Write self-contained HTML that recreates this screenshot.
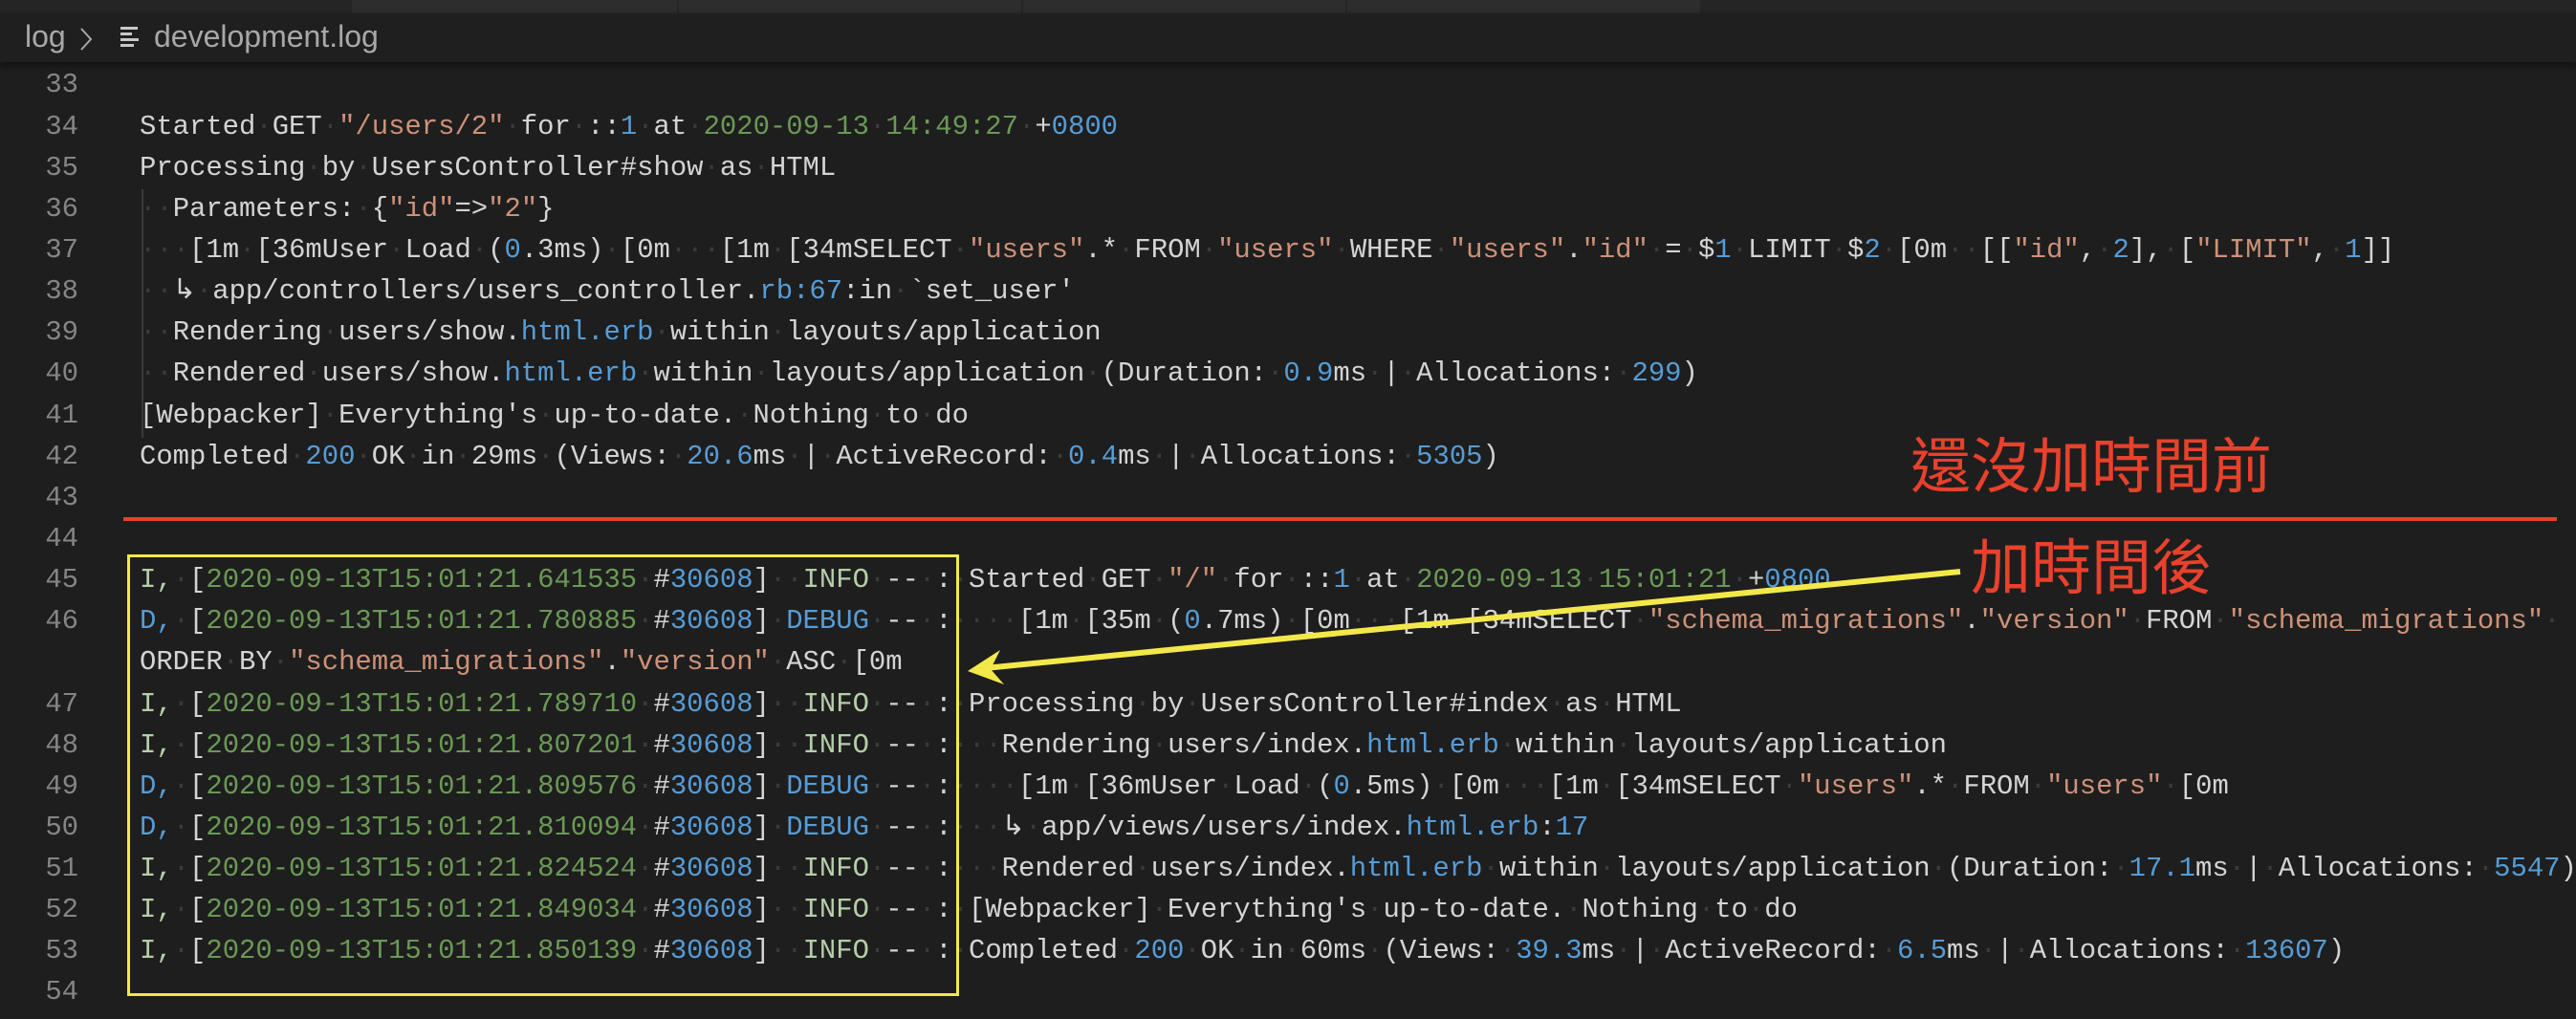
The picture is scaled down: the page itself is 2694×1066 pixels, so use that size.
<!DOCTYPE html>
<html><head><meta charset="utf-8"><style>
html,body{margin:0;padding:0;background:#1e1e1e;width:2694px;height:1066px;overflow:hidden;position:relative}
.top{position:absolute;left:0;top:0;width:2694px;height:14px;background:#252526}
.tab{position:absolute;top:0;height:14px;background:#2d2d2d;border-right:2px solid #252526}
.bc{position:absolute;left:0;top:14px;width:2694px;height:51px;background:#1f1f1f;box-shadow:0 3px 6px #111}
.bc span{position:absolute;top:0;font:32px "Liberation Sans",sans-serif;color:#a8a8a8;line-height:48px}
.ln,.code{position:absolute;top:67.4px;font-family:"Liberation Mono",monospace;font-size:28.9px;line-height:43.15px}
.ln{left:0;width:82px;text-align:right;color:#858585}
.code{left:146px;color:#d4d4d4}
.code div,.ln div{height:43.15px;white-space:pre}
.s{color:#ce9178}.b{color:#569cd6}.g{color:#6a9955}.p{color:#b5cea8}
.d{color:#3a3a3a}
.guide{position:absolute;left:148px;top:198px;width:2px;height:260px;background:#3a3a3a}
.red{position:absolute;left:129px;top:541px;width:2545px;height:4px;background:#e8412c}
.box{position:absolute;left:133px;top:580px;width:864px;height:456px;border:3px solid #f3e84a}
.ann{position:absolute;color:#e8412c;font-family:"Noto Sans CJK TC",sans-serif;font-size:63px;line-height:1;white-space:nowrap}
</style></head><body>
<div class="top"><div class="tab" style="left:368px;width:340px"></div><div class="tab" style="left:710px;width:358px"></div><div class="tab" style="left:1070px;width:337px"></div><div class="tab" style="left:1409px;width:369px"></div></div>
<div class="bc">
<span style="left:26px">log</span>
<svg style="position:absolute;left:82px;top:14px" width="16" height="26" viewBox="0 0 16 26"><path d="M3 2 L13 13 L3 24" stroke="#a8a8a8" stroke-width="2" fill="none"/></svg>
<svg style="position:absolute;left:126px;top:14px" width="20" height="22" viewBox="0 0 20 22"><rect x="0" y="0" width="18" height="3" fill="#c8c8c8"/><rect x="0" y="6" width="12" height="3" fill="#c8c8c8"/><rect x="0" y="12" width="19" height="3" fill="#c8c8c8"/><rect x="0" y="18" width="14" height="3" fill="#c8c8c8"/></svg>
<span style="left:161px">development.log</span>
</div>
<div class="guide"></div>
<div class="ln"><div>33</div><div>34</div><div>35</div><div>36</div><div>37</div><div>38</div><div>39</div><div>40</div><div>41</div><div>42</div><div>43</div><div>44</div><div>45</div><div>46</div><div></div><div>47</div><div>48</div><div>49</div><div>50</div><div>51</div><div>52</div><div>53</div><div>54</div></div>
<div class="code" id="c">
<div></div>
<div>Started GET <span class="s">"/users/2"</span> for ::<span class="b">1</span> at <span class="g">2020-09-13 14:49:27</span> +<span class="b">0800</span></div>
<div>Processing by UsersController#show as HTML</div>
<div>  Parameters: {<span class="s">"id"</span>=&gt;<span class="s">"2"</span>}</div>
<div>   [1m [36mUser Load (<span class="b">0</span>.3ms) [0m   [1m [34mSELECT <span class="s">"users"</span>.* FROM <span class="s">"users"</span> WHERE <span class="s">"users"</span>.<span class="s">"id"</span> = $<span class="b">1</span> LIMIT $<span class="b">2</span> [0m  [[<span class="s">"id"</span>, <span class="b">2</span>], [<span class="s">"LIMIT"</span>, <span class="b">1</span>]]</div>
<div>  ↳ app/controllers/users_controller.<span class="b">rb:67</span>:in `set_user'</div>
<div>  Rendering users/show.<span class="b">html.erb</span> within layouts/application</div>
<div>  Rendered users/show.<span class="b">html.erb</span> within layouts/application (Duration: <span class="b">0.9</span>ms | Allocations: <span class="b">299</span>)</div>
<div>[Webpacker] Everything's up-to-date. Nothing to do</div>
<div>Completed <span class="b">200</span> OK in 29ms (Views: <span class="b">20.6</span>ms | ActiveRecord: <span class="b">0.4</span>ms | Allocations: <span class="b">5305</span>)</div>
<div></div>
<div></div>
<div><span class="p">I,</span> [<span class="g">2020-09-13T15:01:21.641535</span> #<span class="b">30608</span>]  <span class="p">INFO</span> -- : Started GET <span class="s">"/"</span> for ::<span class="b">1</span> at <span class="g">2020-09-13 15:01:21</span> +<span class="b">0800</span></div>
<div><span class="b">D,</span> [<span class="g">2020-09-13T15:01:21.780885</span> #<span class="b">30608</span>] <span class="b">DEBUG</span> -- :    [1m [35m (<span class="b">0</span>.7ms) [0m   [1m [34mSELECT <span class="s">"schema_migrations"</span>.<span class="s">"version"</span> FROM <span class="s">"schema_migrations"</span> </div>
<div>ORDER BY <span class="s">"schema_migrations"</span>.<span class="s">"version"</span> ASC [0m</div>
<div><span class="p">I,</span> [<span class="g">2020-09-13T15:01:21.789710</span> #<span class="b">30608</span>]  <span class="p">INFO</span> -- : Processing by UsersController#index as HTML</div>
<div><span class="p">I,</span> [<span class="g">2020-09-13T15:01:21.807201</span> #<span class="b">30608</span>]  <span class="p">INFO</span> -- :   Rendering users/index.<span class="b">html.erb</span> within layouts/application</div>
<div><span class="b">D,</span> [<span class="g">2020-09-13T15:01:21.809576</span> #<span class="b">30608</span>] <span class="b">DEBUG</span> -- :    [1m [36mUser Load (<span class="b">0</span>.5ms) [0m   [1m [34mSELECT <span class="s">"users"</span>.* FROM <span class="s">"users"</span> [0m</div>
<div><span class="b">D,</span> [<span class="g">2020-09-13T15:01:21.810094</span> #<span class="b">30608</span>] <span class="b">DEBUG</span> -- :   ↳ app/views/users/index.<span class="b">html.erb</span>:<span class="b">17</span></div>
<div><span class="p">I,</span> [<span class="g">2020-09-13T15:01:21.824524</span> #<span class="b">30608</span>]  <span class="p">INFO</span> -- :   Rendered users/index.<span class="b">html.erb</span> within layouts/application (Duration: <span class="b">17.1</span>ms | Allocations: <span class="b">5547</span>)</div>
<div><span class="p">I,</span> [<span class="g">2020-09-13T15:01:21.849034</span> #<span class="b">30608</span>]  <span class="p">INFO</span> -- : [Webpacker] Everything's up-to-date. Nothing to do</div>
<div><span class="p">I,</span> [<span class="g">2020-09-13T15:01:21.850139</span> #<span class="b">30608</span>]  <span class="p">INFO</span> -- : Completed <span class="b">200</span> OK in 60ms (Views: <span class="b">39.3</span>ms | ActiveRecord: <span class="b">6.5</span>ms | Allocations: <span class="b">13607</span>)</div>
<div></div>
</div>
<div class="red"></div>
<div class="box"></div>
<div class="ann" style="left:1998px;top:452px">還沒加時間前</div>
<div class="ann" style="left:2061px;top:558px">加時間後</div>
<svg style="position:absolute;left:0;top:0" width="2694" height="1066"><path d="M2050 598 L1030 699" stroke="#f3e84a" stroke-width="6" fill="none"/><path d="M1012 702 L1046 680 L1036 700 L1050 716 Z" fill="#f3e84a"/></svg>
<script>
(function(){var c=document.getElementById('c');var w=document.createTreeWalker(c,NodeFilter.SHOW_TEXT,null);var n=[];while(w.nextNode())n.push(w.currentNode);n.forEach(function(t){if(t.parentNode===c)return;if(t.nodeValue.indexOf(' ')<0)return;var f=document.createDocumentFragment();t.nodeValue.split(/( )/).forEach(function(p){if(p===' '){var s=document.createElement('span');s.className='d';s.textContent='·';f.appendChild(s);}else if(p)f.appendChild(document.createTextNode(p));});t.parentNode.replaceChild(f,t);});})();
</script>
</body></html>
